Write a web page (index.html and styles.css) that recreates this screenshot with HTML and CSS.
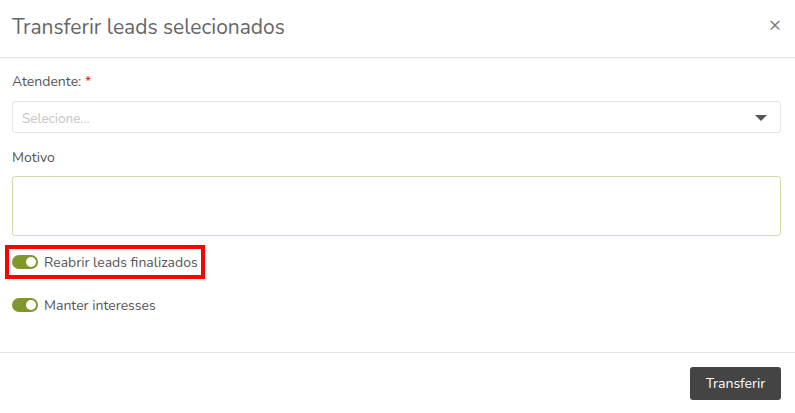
FILE: index.html
```html
<!DOCTYPE html>
<html>
<head>
  <meta charset="UTF-8">
  <title>Transferir leads</title>
  <meta name="viewport" content="width=device-width, initial-scale=1.0">
  <link rel="stylesheet" href="styles.css">
</head>
<body>
  <div class="modal">
    <div class="modal-header">
      <h4 class="modal-title">Transferir leads selecionados</h4>
      <span class="close">&times;</span>
    </div>

    <div class="modal-body">
      <label class="field-label">Atendente: <span class="req">*</span></label>
      <div class="select">
        <span class="placeholder">Selecione...</span>
        <span class="caret"></span>
      </div>

      <label class="field-label motivo">Motivo</label>
      <div class="textarea"></div>

      <!-- destaque -->
      <div class="switch-row highlight">
        <span class="switch"><span class="knob"></span></span>
        <span class="switch-text">Reabrir leads finalizados</span>
      </div>

      <div class="switch-row">
        <span class="switch"><span class="knob"></span></span>
        <span class="switch-text">Manter interesses</span>
      </div>
    </div>

    <div class="modal-footer">
      <button class="btn">Transferir</button>
    </div>
  </div>
</body>
</html>
```

FILE: styles.css
```css
body { margin: 0; background: #fff; font-family: "Nunito", Lato, "Noto Sans", sans-serif; color: #555; }
.modal { width: 795px; }

.modal-header { height: 58px; border-bottom: 1px solid #e3e3e3; display: flex; align-items: center; justify-content: space-between; padding: 0 14px 0 12px; box-sizing: border-box; }
.modal-title { margin: 0; font-size: 21px; font-weight: 400; color: #666; padding-bottom: 3px; }
.close { font-size: 20px; color: #777; line-height: 1; margin-top: -8px; }

.modal-body { padding: 14px 14px 30px 12px; }
.field-label { display: block; font-size: 14px; line-height: 20px; color: #555; margin-bottom: 9px; }
.field-label.motivo { margin-top: 15px; margin-bottom: 8px; }
.req { color: #e02020; }

.select { height: 32px; box-sizing: border-box; border: 1px solid #e2e2e2; border-radius: 3px; display: flex; align-items: center; justify-content: space-between; padding: 2px 13px 0 9px; }
.placeholder { font-size: 13.5px; color: #c4c4c4; }
.caret { width: 0; height: 0; border-left: 6px solid transparent; border-right: 6px solid transparent; border-top: 6px solid #555; }

.textarea { height: 60px; box-sizing: border-box; border: 1px solid #d3dca6; border-radius: 3px; }

.switch-row { display: flex; align-items: center; height: 34px; box-sizing: border-box; margin-top: 9px; }
.switch-row.highlight { margin-top: 9px; margin-left: -7px; width: 200px; border: 4px solid #ff0000; padding-left: 3px; }
.switch { width: 26px; height: 14px; border-radius: 7px; background: #80972b; position: relative; flex: none; }
.knob { position: absolute; right: 2px; top: 2px; width: 10px; height: 10px; border-radius: 50%; background: #fff; }
.switch-text { margin-left: 6px; font-size: 14px; color: #555; }

.modal-footer { border-top: 1px solid #e3e3e3; padding: 14px 14px 0 0; display: flex; justify-content: flex-end; }
.btn { width: 91px; height: 33px; background: #444; color: #fff; border: none; border-radius: 3px; font-family: inherit; font-size: 14px; }
```
